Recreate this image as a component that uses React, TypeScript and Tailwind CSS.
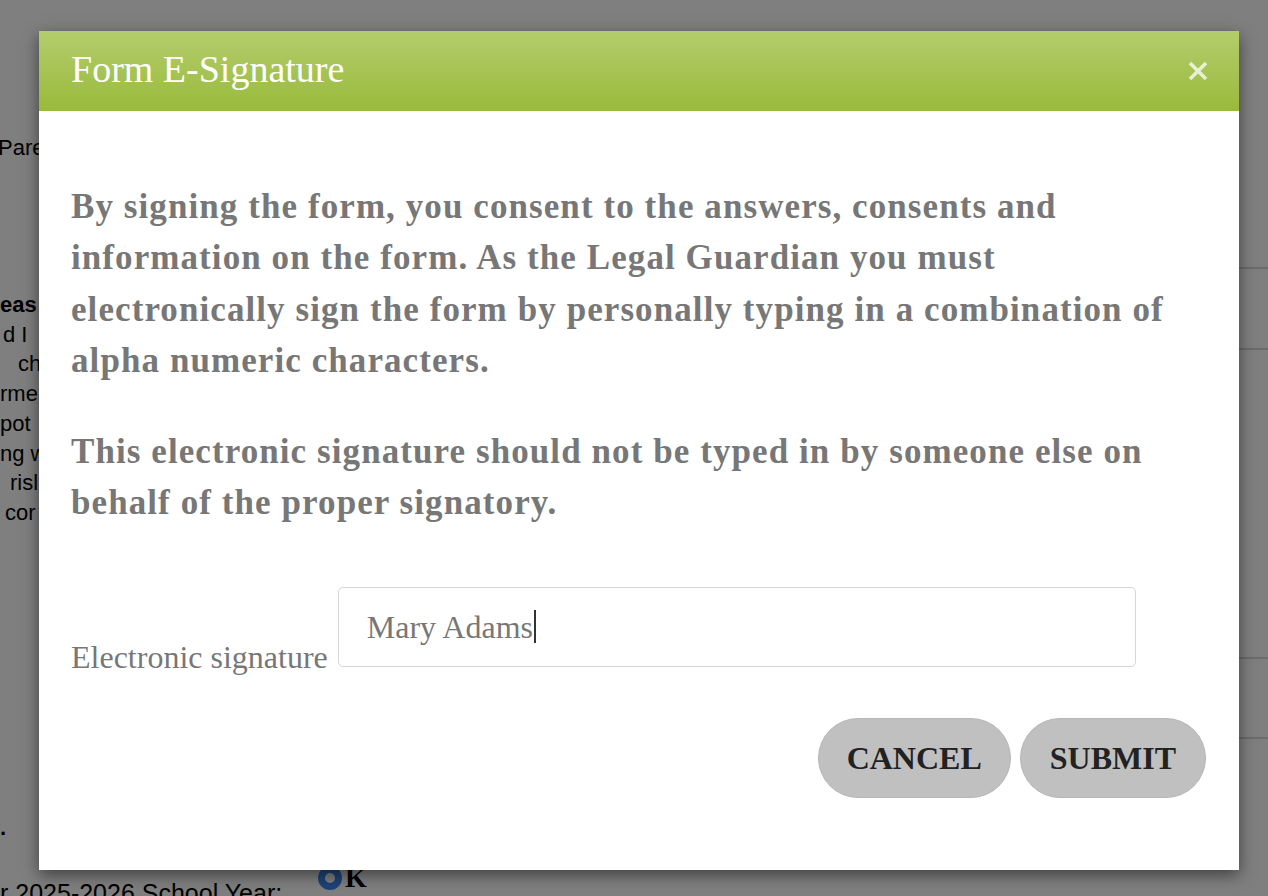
function BackgroundPage() {
  return (
    <div className="flex font-['Liberation_Sans',Arial,sans-serif] text-[22px] text-black">
      <div className="w-[560px] shrink-0">
        <div className="mt-[134px] -ml-[2px] whitespace-nowrap leading-[28px]">Pare</div>
        <div className="mt-[128px] whitespace-nowrap leading-[29.7px]">
          <div className="font-bold">eas</div>
          <div className="pl-[3px]">d I</div>
          <div className="pl-[18px]">ch</div>
          <div>rme</div>
          <div>pot</div>
          <div>ng w</div>
          <div className="pl-[10px]">risl</div>
          <div className="pl-[5px]">cor</div>
        </div>
        <div className="mt-[285px] font-bold leading-[30px]">.</div>
        <div className="mt-[23px] flex items-start">
          <div className="w-[318px] shrink-0 pt-[12px] text-[25px] leading-[30px] whitespace-nowrap">r 2025-2026 School Year:</div>
          <div className="flex items-center gap-[3px]">
            <span className="h-[24px] w-[24px] rounded-full border-[7px] border-[#3f86f0] bg-white" />
            <span className="font-['Liberation_Serif',serif] text-[28px] font-bold leading-[24px]">K</span>
          </div>
        </div>
      </div>
      <div className="flex-1 pt-[267px]">
        <div className="h-[81px] border-t-2 border-[#d8d8d8]" />
        <div className="h-[309px] border-t-2 border-[#d8d8d8]" />
        <div className="h-[80px] border-t-2 border-[#d8d8d8]" />
        <div className="border-t-2 border-[#d8d8d8]" />
      </div>
    </div>
  );
}

function SignatureModal() {
  return (
    <div className="flex h-[839px] w-[1200px] flex-col bg-white font-['Liberation_Serif','Times_New_Roman',serif] shadow-[0_5px_15px_rgba(0,0,0,0.5)]">
      <div className="flex h-[80px] shrink-0 items-center justify-between bg-linear-to-b from-[#b4cd6c] to-[#99ba38] pl-[32px] pr-[30px]">
        <h2 className="mb-[4px] text-[38px] leading-none text-white">Form E-Signature</h2>
        <button className="flex h-[22px] w-[22px] items-center justify-center opacity-75">
          <svg width="22" height="22" viewBox="0 0 22 22" fill="none" stroke="white" strokeWidth="3.6">
            <path d="M3 3 L19 19 M19 3 L3 19" />
          </svg>
        </button>
      </div>

      <div className="px-[32px] pt-[70px] text-[#777]">
        <p className="text-[35px] font-bold leading-[51.3px] tracking-[1.08px]">
          By signing the form, you consent to the answers, consents and information on the form. As the Legal Guardian you must electronically sign the form by personally typing in a combination of alpha numeric characters.
        </p>
        <p className="mt-[40px] text-[35px] font-bold leading-[51.3px] tracking-[1.08px]">
          This electronic signature should not be typed in by someone else on behalf of the proper signatory.
        </p>

        <div className="mt-[58px] flex items-end">
          <label className="mr-[10px] whitespace-nowrap text-[32px] leading-[20px]">Electronic signature</label>
          <div className="flex h-[80px] w-[798px] items-center rounded-[5px] border border-[#d6d6d6] pl-[28px] text-[32px] leading-none">
            <span>Mary Adams</span>
            <span className="ml-px h-[33px] w-[2px] bg-[#333]" />
          </div>
        </div>

        <div className="mt-[51px] flex justify-end gap-[9px] pr-px">
          <button className="flex h-[80px] items-center rounded-full border border-[#b6b6b6] bg-[#c0c0c0] px-[28px] text-[32px] font-bold leading-none text-[#222]">
            CANCEL
          </button>
          <button className="flex h-[80px] items-center rounded-full border border-[#b6b6b6] bg-[#c0c0c0] px-[29px] text-[32px] font-bold leading-none text-[#222]">
            SUBMIT
          </button>
        </div>
      </div>
    </div>
  );
}

export default function App() {
  return (
    <div className="relative h-[896px] w-full overflow-hidden bg-white">
      <BackgroundPage />
      <div className="absolute inset-0 bg-black/50 pl-[39px] pt-[31px]">
        <SignatureModal />
      </div>
    </div>
  );
}
